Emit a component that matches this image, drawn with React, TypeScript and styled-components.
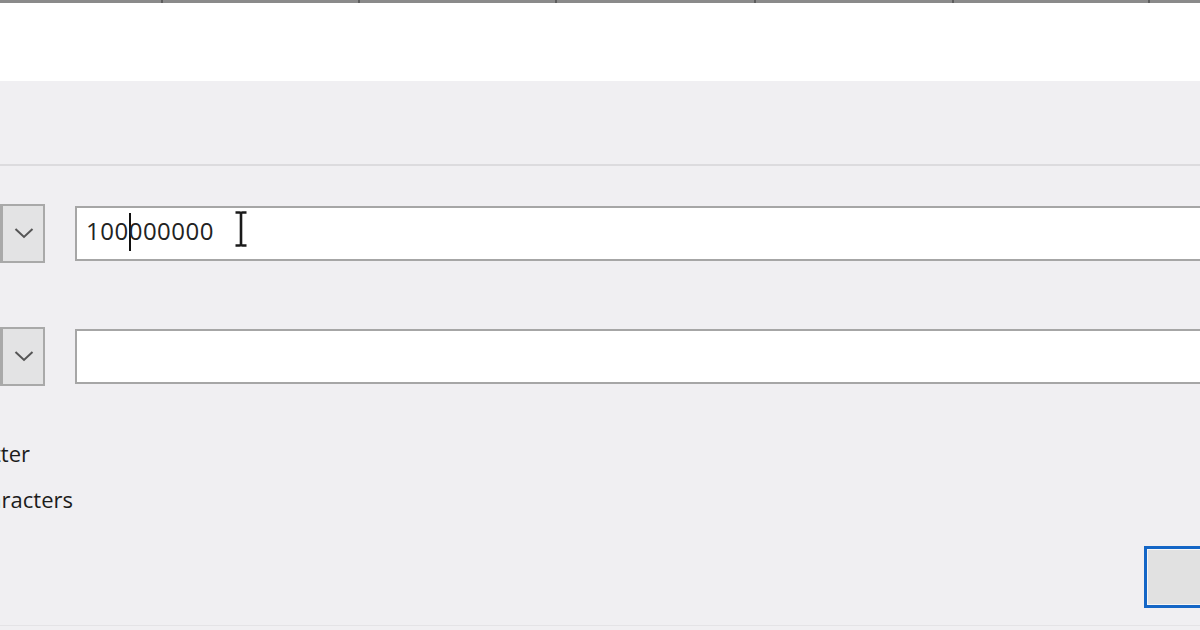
import styled, { createGlobalStyle } from "styled-components";

const GlobalStyle = createGlobalStyle`
  html, body {
    margin: 0;
    padding: 0;
    background: #f0eff2;
    overflow: hidden;
  }
  body {
    font-family: "Open Sans", "Noto Sans", sans-serif;
  }
`;

const columns = [163, 197, 197, 199, 198, 196, 60];

const App = () => {
  return (
    <Page>
      <GlobalStyle />
      <HeaderStrip>
        {columns.map((w, i) => (
          <HeaderCell key={i} style={{ width: w }} />
        ))}
      </HeaderStrip>
      <WhiteArea />
      <Toolbar />
      <Form>
        <FieldRow>
          <DropButton>
            <Chevron />
          </DropButton>
          <TextBox>
            <Value>
              100
              <Caret />
              000000
            </Value>
            <IBeam />
          </TextBox>
        </FieldRow>
        <FieldRow $gap={64}>
          <DropButton>
            <Chevron />
          </DropButton>
          <TextBox />
        </FieldRow>
        <Options>
          <Option $width={30}>Uppercase letter</Option>
          <Option $width={73}>Special characters</Option>
        </Options>
        <Footer>
          <DialogButton />
        </Footer>
      </Form>
      <BottomLine />
    </Page>
  );
};

const Chevron = () => (
  <svg width="20" height="12" viewBox="0 0 20 12">
    <polyline
      points="1.5,2 10,10 18.5,2"
      fill="none"
      stroke="#555555"
      strokeWidth="2"
    />
  </svg>
);

const IBeam = () => (
  <CursorWrap>
    <svg width="14" height="36" viewBox="0 0 14 36">
      <path
        d="M1.5 1.5 H5.5 Q7 1.5 7 3 V33 Q7 34.5 5.5 34.5 H1.5 M12.5 1.5 H8.5 Q7 1.5 7 3 M7 33 Q7 34.5 8.5 34.5 H12.5"
        fill="none"
        stroke="#1a1a1a"
        strokeWidth="2.6"
      />
    </svg>
  </CursorWrap>
);

export default App;

const Page = styled.div`
  width: 1200px;
  height: 630px;
  display: flex;
  flex-direction: column;
  overflow: hidden;
  background: #f0eff2;
`;

const HeaderStrip = styled.div`
  height: 3px;
  display: flex;
  background: #8a8a8a;
  flex-shrink: 0;
`;

const HeaderCell = styled.div`
  height: 3px;
  box-sizing: border-box;
  border-right: 2px solid #5e5e5e;
  flex-shrink: 0;
`;

const WhiteArea = styled.div`
  height: 78px;
  background: #ffffff;
  flex-shrink: 0;
`;

const Toolbar = styled.div`
  height: 83px;
  background: #f0eff2;
  border-bottom: 2px solid #dcdbde;
  flex-shrink: 0;
`;

const Form = styled.div`
  display: flex;
  flex-direction: column;
  padding-top: 38px;
`;

const FieldRow = styled.div<{ $gap?: number }>`
  display: flex;
  align-items: center;
  gap: 30px;
  height: 59px;
  margin-top: ${(p) => p.$gap ?? 0}px;
`;

const DropButton = styled.div`
  width: 45px;
  height: 59px;
  box-sizing: border-box;
  border: 2px solid #a9a9a9;
  border-left-width: 3px;
  background: #e3e3e4;
  display: flex;
  align-items: center;
  justify-content: center;
  padding: 0 0 2px 1px;
  flex-shrink: 0;
`;

const TextBox = styled.div`
  flex: 1;
  height: 55px;
  margin-right: -20px;
  box-sizing: border-box;
  border: 2px solid #a6a6a6;
  background: #ffffff;
  display: flex;
  align-items: center;
  padding: 0 0 6px 9px;
`;

const Value = styled.span`
  font-size: 24px;
  color: #222;
  letter-spacing: 0.5px;
  display: flex;
  align-items: center;
`;

const Caret = styled.span`
  display: inline-block;
  width: 0;
  height: 38px;
  border-left: 2px solid #111;
  margin: 3px -2px 0 0;
`;

const CursorWrap = styled.span`
  display: flex;
  margin-left: 20px;
  margin-top: -4px;
`;

const Options = styled.div`
  display: flex;
  flex-direction: column;
  margin-top: 44px;
`;

const Option = styled.div<{ $width: number }>`
  width: ${(p) => p.$width}px;
  display: flex;
  justify-content: flex-end;
  overflow: hidden;
  white-space: nowrap;
  font-size: 22px;
  line-height: 46px;
  color: #1c1c1c;
`;

const Footer = styled.div`
  display: flex;
  justify-content: flex-end;
  margin-top: 24px;
`;

const DialogButton = styled.div`
  width: 100px;
  height: 62px;
  margin-right: -44px;
  box-sizing: border-box;
  border: 3px solid #1466c6;
  box-shadow: inset 0 0 0 1px #f6f6f6;
  background: #e1e1e1;
`;

const BottomLine = styled.div`
  margin-top: 17px;
  height: 1px;
  background: #e4e3e6;
`;
